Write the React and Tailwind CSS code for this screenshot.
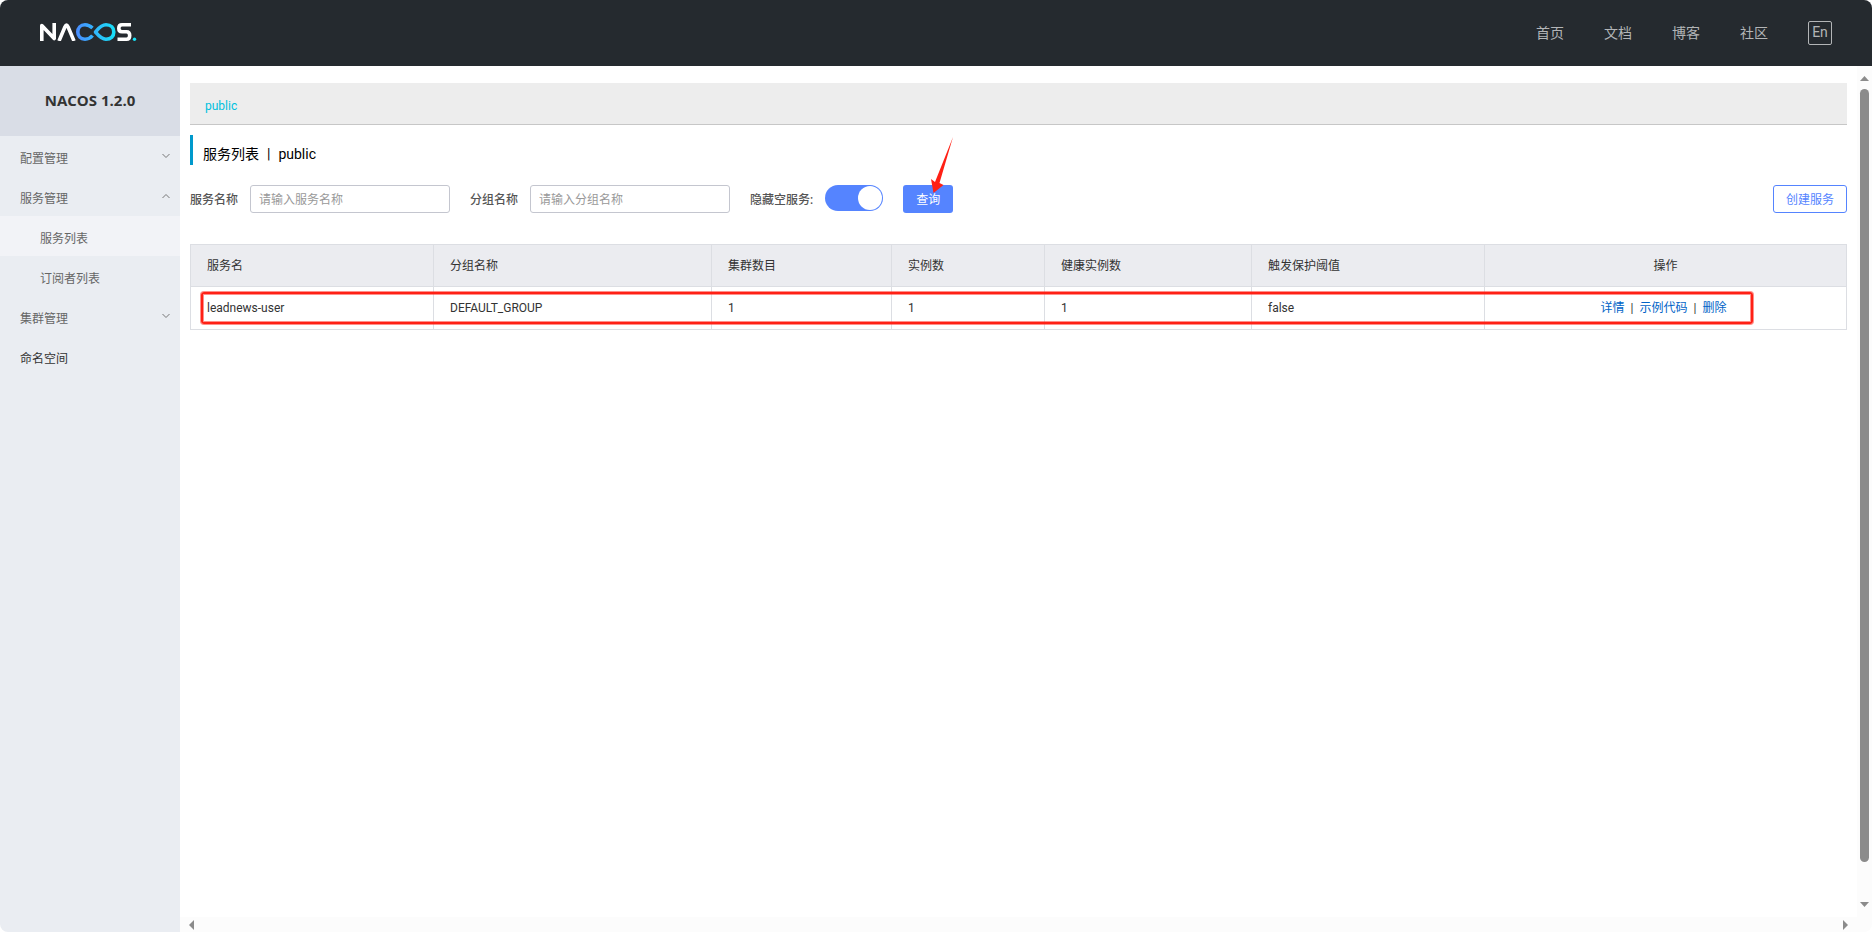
import React, { useState } from 'react';

const NAV_LINKS = ['首页', '文档', '博客', '社区'];

const COLUMNS = [
    { title: '服务名', width: 'w-[243px]' },
    { title: '分组名称', width: 'w-[278px]' },
    { title: '集群数目', width: 'w-[180px]' },
    { title: '实例数', width: 'w-[153px]' },
    { title: '健康实例数', width: 'w-[207px]' },
    { title: '触发保护阈值', width: 'w-[233px]' },
    { title: '操作', width: 'w-auto' },
];

const SERVICES = [
    {
        name: 'leadnews-user',
        groupName: 'DEFAULT_GROUP',
        clusterCount: 1,
        ipCount: 1,
        healthyInstanceCount: 1,
        triggerFlag: 'false',
    },
];

function Logo() {
    return (
        <svg width="97" height="18" viewBox="0 0 97 18" fill="none" role="img" aria-label="NACOS">
            <defs>
                <linearGradient id="loop" gradientUnits="userSpaceOnUse" x1="36" y1="0" x2="76" y2="0">
                    <stop offset="0" stopColor="#4a8cff" />
                    <stop offset="1" stopColor="#16e3f8" />
                </linearGradient>
            </defs>
            <g strokeWidth="3.6" strokeLinejoin="round">
                <path d="M1.8 18V2.5L14.200 15.500V0" stroke="#fff" />
                <path d="M19 18L25 3.800Q26.500 0.500 28 3.800L34 18" stroke="#fff" />
                <path
                    d="M52.500 5C50 2.800 48 1.800 45 1.800C40.500 1.800 37.800 5 37.800 9C37.800 13 40.500 16.200 45 16.200C48 16.200 50.500 15 52.500 12.500"
                    stroke="url(#loop)"
                />
                <path
                    d="M55.500 9C58.500 5.500 61 1.800 66 1.800C71 1.800 73.800 5 73.800 9C73.800 13 71 16.200 66 16.200C61 16.200 58.500 12.500 55.500 9Z"
                    stroke="url(#loop)"
                />
                <path
                    d="M91 1.800H82Q78.800 1.800 78.800 5.200Q78.800 8.700 82 8.700H86.500Q89.700 8.700 89.700 12.500Q89.700 16.200 86.500 16.200H77.500"
                    stroke="#fff"
                />
            </g>
            <circle cx="94.500" cy="16.300" r="1.700" fill="#16e3f8" />
        </svg>
    );
}

function Chevron({ open }) {
    return (
        <svg width="8" height="6" viewBox="0 0 8 6" fill="none" stroke="#777" aria-hidden="true">
            <path d={open ? 'M0.500 5L4 1.500L7.500 5' : 'M0.500 1L4 4.500L7.500 1'} />
        </svg>
    );
}

function Header() {
    return (
        <header className="flex h-[66px] shrink-0 items-center justify-between bg-[#252a2f] px-10">
            <a href="#home" className="pb-0.5">
                <Logo />
            </a>
            <nav className="flex items-center gap-10 text-sm text-[#b3b5b7]">
                {NAV_LINKS.map((label) => (
                    <a key={label} href="#nav">
                        {label}
                    </a>
                ))}
                <button
                    type="button"
                    className="flex size-6 items-center justify-center rounded-xs border border-[#b3b5b7] pb-0.5"
                >
                    En
                </button>
            </nav>
        </header>
    );
}

function MenuGroup({ label, open, onToggle }) {
    return (
        <button
            type="button"
            aria-expanded={open}
            onClick={onToggle}
            className="flex h-10 w-full items-center justify-between pt-1.5 pr-[10px] pl-5 text-[#666]"
        >
            {label}
            <span className="pb-1.5">
                <Chevron open={open} />
            </span>
        </button>
    );
}

function Sidebar() {
    const [open, setOpen] = useState({ config: false, service: true, cluster: false });
    const toggle = (key) => setOpen({ ...open, [key]: !open[key] });

    return (
        <aside className="w-[180px] shrink-0 bg-[#eaedf2]">
            <h1 className="flex h-[70px] items-center justify-center bg-[#d9dde6] pb-0.5 font-['Open_Sans',sans-serif] text-[15px] font-bold text-[#333]">
                NACOS 1.2.0
            </h1>
            <MenuGroup label="配置管理" open={open.config} onToggle={() => toggle('config')} />
            <MenuGroup label="服务管理" open={open.service} onToggle={() => toggle('service')} />
            {open.service && (
                <>
                    <a href="#services" className="flex h-10 items-center bg-[#f2f3f7] pt-1.5 pl-10 text-[#666]">
                        服务列表
                    </a>
                    <a href="#subscribers" className="flex h-10 items-center pt-1.5 pl-10 text-[#666]">
                        订阅者列表
                    </a>
                </>
            )}
            <MenuGroup label="集群管理" open={open.cluster} onToggle={() => toggle('cluster')} />
            <a href="#namespace" className="flex h-10 items-center pt-1.5 pl-5 text-[#333]">
                命名空间
            </a>
        </aside>
    );
}

function SearchForm() {
    const [hideEmpty, setHideEmpty] = useState(true);
    const labelClass = 'mr-3 pt-0.5 font-medium text-[#555]';
    const inputClass =
        'h-7 w-[200px] rounded-[3px] border border-[#c4c6cf] bg-white px-2 pt-0.5 text-[#333] outline-none placeholder:text-[#999]';

    return (
        <form className="flex items-center" onSubmit={(e) => e.preventDefault()}>
            <label htmlFor="serviceName" className={labelClass}>
                服务名称
            </label>
            <input id="serviceName" type="text" placeholder="请输入服务名称" className={inputClass} />
            <label htmlFor="groupName" className={`${labelClass} ml-5`}>
                分组名称
            </label>
            <input id="groupName" type="text" placeholder="请输入分组名称" className={inputClass} />
            <label htmlFor="hideEmpty" className={`${labelClass} ml-5`}>
                隐藏空服务:
            </label>
            <input
                id="hideEmpty"
                type="checkbox"
                role="switch"
                checked={hideEmpty}
                onChange={(e) => setHideEmpty(e.target.checked)}
                className="mb-0.5 flex h-[26px] w-[58px] appearance-none rounded-full bg-[#ccc] p-px before:size-6 before:rounded-full before:bg-white checked:justify-end checked:bg-[#5584ff]"
            />
            <div className="relative ml-5">
                <button type="submit" className="h-7 w-[50px] rounded-[3px] bg-[#5584ff] pt-0.5 text-white">
                    查询
                </button>
                <svg
                    className="pointer-events-none absolute -top-12 left-7"
                    width="22"
                    height="56"
                    viewBox="0 0 22 56"
                    aria-hidden="true"
                >
                    <path d="M22 0L8.500 46L12.500 48L2.500 56L0 42L4 45Z" fill="#ff2015" />
                </svg>
            </div>
            <button
                type="button"
                className="ml-auto h-7 w-[74px] rounded-[3px] border border-[#5584ff] bg-white pt-0.5 text-[#5584ff]"
            >
                创建服务
            </button>
        </form>
    );
}

function ServiceTable() {
    return (
        <div className="relative mt-[31px]">
            <table className="w-full table-fixed border-separate border-spacing-0 border-t border-l border-[#dcdee3] text-left text-[#333]">
                <thead className="bg-[#ebecf0]">
                    <tr className="h-[42px]">
                        {COLUMNS.map(({ title, width }) => (
                            <th
                                key={title}
                                className={`${width} border-r border-b border-[#dcdee3] px-4 font-normal last:text-center`}
                            >
                                {title}
                            </th>
                        ))}
                    </tr>
                </thead>
                <tbody>
                    {SERVICES.map((service) => (
                        <tr key={service.name} className="h-[43px]">
                            {Object.values(service).map((value, i) => (
                                <td key={i} className="border-r border-b border-[#dcdee3] px-4">
                                    {value}
                                </td>
                            ))}
                            <td className="border-r border-b border-[#dcdee3] pr-5 pl-4 text-center">
                                <a href="#detail" className="text-[#0063c7]">详情</a>
                                <span className="mx-[6px]">|</span>
                                <a href="#code" className="text-[#0063c7]">示例代码</a>
                                <span className="mx-[6px]">|</span>
                                <a href="#delete" className="text-[#0063c7]">删除</a>
                            </td>
                        </tr>
                    ))}
                </tbody>
            </table>
            <div className="pointer-events-none absolute top-12 right-[94px] left-[11px] h-8 rounded-[3px] border-2 border-[#ff2015] ring-1 ring-[#ff2015]/50 inset-ring-1 inset-ring-[#ff2015]/50" />
        </div>
    );
}

export default function App() {
    return (
        <div className="flex min-h-screen flex-col overflow-hidden rounded-lg bg-white font-['Roboto','Noto_Sans_CJK_SC',sans-serif] text-xs">
            <Header />
            <div className="flex flex-1">
                <Sidebar />
                <div className="flex min-w-0 flex-1 flex-col">
                    <main className="flex-1 px-[10px] pt-[17px]">
                        <div className="flex h-[42px] items-center border-b border-[#c7c7c7] bg-[#ededed] pt-1 pl-[15px]">
                            <a href="#public" className="text-[#00c1de]">
                                public
                            </a>
                        </div>
                        <h2 className="mt-[10px] mb-5 flex h-[30px] items-center border-l-3 border-[#09c] pt-2 pl-[10px] text-sm text-black">
                            服务列表
                            <span className="mx-2">|</span>
                            public
                        </h2>
                        <SearchForm />
                        <ServiceTable />
                    </main>
                    <div className="flex h-[15px] items-center justify-between bg-[#fcfcfc] px-[9px]">
                        <svg width="5" height="10" viewBox="0 0 5 10" fill="#8b8b8b" aria-hidden="true">
                            <path d="M5 0V10L0 5Z" />
                        </svg>
                        <svg width="5" height="10" viewBox="0 0 5 10" fill="#8b8b8b" aria-hidden="true">
                            <path d="M0 0V10L5 5Z" />
                        </svg>
                    </div>
                </div>
                <div className="flex w-[15px] shrink-0 flex-col items-center bg-[#fcfcfc] pt-[10px] pb-[25px]">
                    <svg width="9" height="5" viewBox="0 0 9 5" fill="#8b8b8b" aria-hidden="true">
                        <path d="M0 5H9L4.500 0Z" />
                    </svg>
                    <div className="mt-2 mb-10 w-[9px] flex-1 rounded-full bg-[#8b8b8b]" />
                    <svg width="9" height="5" viewBox="0 0 9 5" fill="#8b8b8b" aria-hidden="true">
                        <path d="M0 0H9L4.500 5Z" />
                    </svg>
                </div>
            </div>
        </div>
    );
}
